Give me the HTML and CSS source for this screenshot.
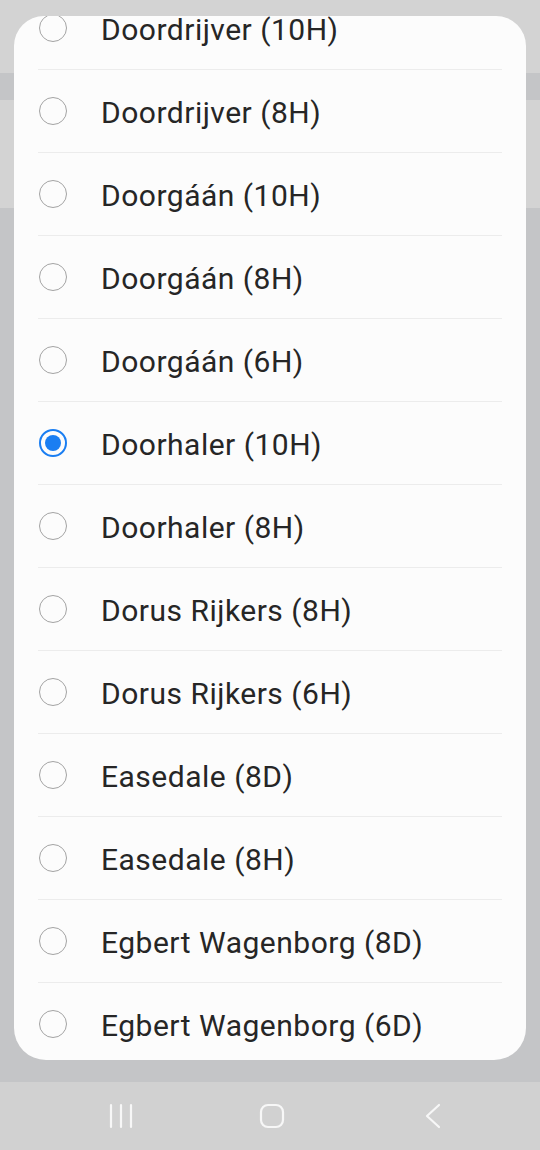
FILE: index.html
```html
<!DOCTYPE html>
<html lang="nl">
<head>
<meta charset="utf-8">
<title>Selectie</title>
<link rel="stylesheet" href="styles.css">
</head>
<body>
<div class="screen">
  <div class="backdrop">
    <div class="band light h73"></div>
    <div class="band dark h27"></div>
    <div class="band light h108"></div>
    <div class="band dark fill"></div>
  </div>
  <nav class="navbar">
    <svg class="nav-icon" width="24" height="26" viewBox="0 0 24 26"><g stroke="#f7f7f7" stroke-width="2.2" stroke-linecap="round"><line x1="2" y1="2" x2="2" y2="24"/><line x1="12" y1="2" x2="12" y2="24"/><line x1="22" y1="2" x2="22" y2="24"/></g></svg>
    <svg class="nav-icon" width="26" height="26" viewBox="0 0 26 26"><rect x="2" y="2" width="22" height="22" rx="7" fill="none" stroke="#f7f7f7" stroke-width="2.2"/></svg>
    <svg class="nav-icon" width="18" height="26" viewBox="0 0 18 26"><polyline points="15,2 3,13 15,24" fill="none" stroke="#f7f7f7" stroke-width="2.2" stroke-linecap="round" stroke-linejoin="round"/></svg>
  </nav>
  <div class="dialog">
    <ul class="list">
      <li class="row"><span class="radio"></span><span class="label">Doordrijver (10H)</span></li>
      <li class="row"><span class="radio"></span><span class="label">Doordrijver (8H)</span></li>
      <li class="row"><span class="radio"></span><span class="label">Doorgáán (10H)</span></li>
      <li class="row"><span class="radio"></span><span class="label">Doorgáán (8H)</span></li>
      <li class="row"><span class="radio"></span><span class="label">Doorgáán (6H)</span></li>
      <li class="row"><span class="radio checked"></span><span class="label">Doorhaler (10H)</span></li>
      <li class="row"><span class="radio"></span><span class="label">Doorhaler (8H)</span></li>
      <li class="row"><span class="radio"></span><span class="label">Dorus Rijkers (8H)</span></li>
      <li class="row"><span class="radio"></span><span class="label">Dorus Rijkers (6H)</span></li>
      <li class="row"><span class="radio"></span><span class="label">Easedale (8D)</span></li>
      <li class="row"><span class="radio"></span><span class="label">Easedale (8H)</span></li>
      <li class="row"><span class="radio"></span><span class="label">Egbert Wagenborg (8D)</span></li>
      <li class="row"><span class="radio"></span><span class="label">Egbert Wagenborg (6D)</span></li>
    </ul>
  </div>
</div>
</body>
</html>
```
FILE: styles.css
```css
* { box-sizing: border-box; }
html, body { margin: 0; padding: 0; }
body {
  font-family: Roboto, "Noto Sans", "Liberation Sans", sans-serif;
  background: #c4c5c7;
}
.screen {
  position: relative;
  width: 540px;
  height: 1150px;
  overflow: hidden;
  display: flex;
  flex-direction: column;
}
.backdrop {
  height: 1082px;
  display: flex;
  flex-direction: column;
}
.band.light { background: #d3d3d3; }
.band.dark { background: #c4c5c7; }
.h73 { height: 73px; }
.h27 { height: 27px; }
.h108 { height: 108px; }
.fill { flex: 1; }

.navbar {
  height: 68px;
  background: #d1d1d1;
  display: flex;
  align-items: center;
  padding: 0 0 0 109px;
}
.nav-icon { display: block; }
.nav-icon:nth-child(1) { margin-right: 126px; }
.nav-icon:nth-child(2) { margin-right: 139px; }

.dialog {
  position: absolute;
  top: 16px;
  left: 14px;
  width: 512px;
  height: 1044px;
  background: #fcfcfc;
  border-radius: 30px 30px 32px 32px;
  overflow: hidden;
}
.list {
  list-style: none;
  margin: -30px 24px 0;
  padding: 0;
}
.row {
  height: 83px;
  border-top: 1px solid #ececec;
  display: flex;
  align-items: center;
  padding-left: 1px;
}
.radio {
  width: 28px;
  height: 28px;
  flex: none;
  border-radius: 50%;
  border: 1.6px solid #a3a3a3;
  margin-right: 34px;
  position: relative;
}
.radio.checked {
  border: 2px solid #1a7ef2;
}
.radio.checked::after {
  content: "";
  position: absolute;
  left: 4px;
  top: 4px;
  width: 16px;
  height: 16px;
  border-radius: 50%;
  background: #1a7ef2;
}
.label {
  font-size: 30px;
  font-weight: 400;
  letter-spacing: 0.5px;
  color: #262626;
  padding-top: 3px;
  white-space: nowrap;
}
```
